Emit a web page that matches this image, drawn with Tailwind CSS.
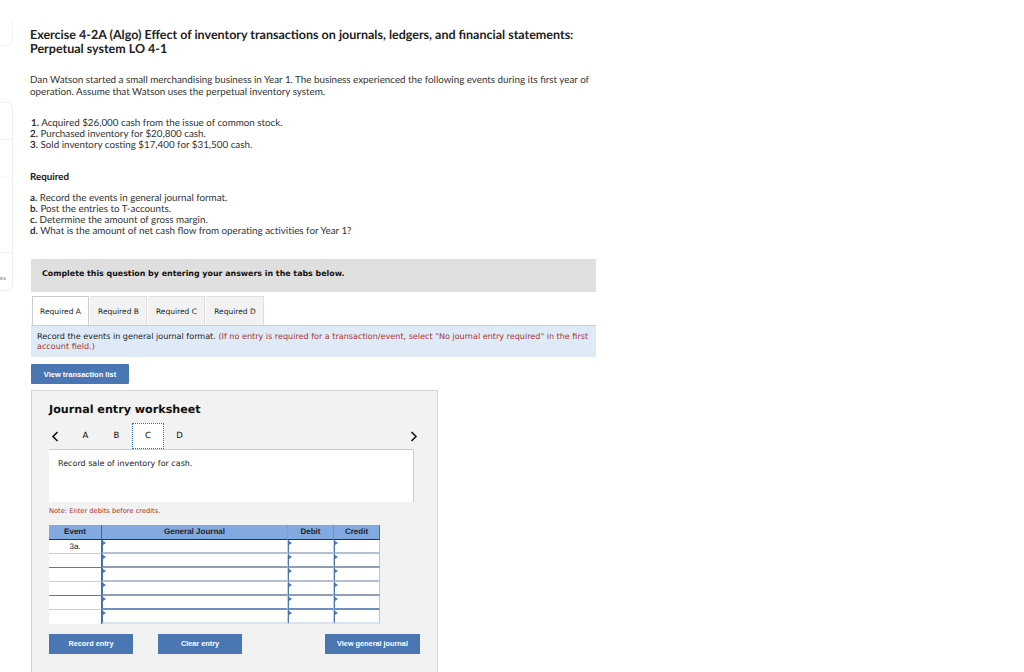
<!DOCTYPE html>
<html lang="en">
  <head>
    <meta charset="UTF-8" />
    <meta name="viewport" content="width=device-width, initial-scale=1.0" />
    <title>Exercise 4-2A</title>
    <script src="https://cdn.jsdelivr.net/npm/@tailwindcss/browser@4"></script>
  </head>
  <body class="bg-white h-[672px] overflow-hidden flex font-['Lato',sans-serif] text-[#333] [text-rendering:geometricPrecision]">
    <!-- cut off side rail -->
    <div class="w-[13px] shrink-0 mr-[18px]">
      <div class="h-[26px] mt-[20px] border-r border-b border-[#f3f3f3] rounded-br-md"></div>
      <div class="mt-[56px] h-[189px] border-r border-y border-[#efefef] rounded-r-md flex flex-col">
        <div class="h-[37px] border-b border-[#efefef]"></div>
        <div class="h-[37px] border-b border-[#f8f8f8]"></div>
        <div class="h-[76px] border-b border-[#efefef]"></div>
        <div class="text-[6px] text-[#777] pt-[22px] leading-[8px]">es</div>
      </div>
    </div>

    <main class="w-[565px] pt-[28px]">
      <div class="-ml-px">
        <h1 class="text-[12.5px] leading-[14px] font-bold text-[#222]">
          Exercise 4-2A (Algo) Effect of inventory transactions on journals, ledgers, and financial statements:<br />Perpetual system LO 4-1
        </h1>
        <p class="mt-[19px] text-[9.8px] leading-[11.5px] whitespace-nowrap">
          Dan Watson started a small merchandising business in Year 1. The business experienced the following events during its first year of<br />operation. Assume that Watson uses the perpetual inventory system.
        </p>
        <ol class="mt-[20px] text-[9.8px] leading-[11px]">
          <li><b class="font-bold ml-[1px]">1.</b> Acquired $26,000 cash from the issue of common stock.</li>
          <li><b class="font-bold">2.</b> Purchased inventory for $20,800 cash.</li>
          <li><b class="font-bold">3.</b> Sold inventory costing $17,400 for $31,500 cash.</li>
        </ol>
        <p class="mt-[21px] text-[9.8px] leading-[11px] font-bold text-[#222]">Required</p>
        <ul class="mt-[10px] text-[9.8px] leading-[11px]">
          <li><b class="font-bold">a.</b> Record the events in general journal format.</li>
          <li><b class="font-bold">b.</b> Post the entries to T-accounts.</li>
          <li><b class="font-bold">c.</b> Determine the amount of gross margin.</li>
          <li><b class="font-bold">d.</b> What is the amount of net cash flow from operating activities for Year 1?</li>
        </ul>
      </div>

      <div class="mt-[22px] h-[33px] bg-[#dfdfdf] pl-[11px] pb-[4px] flex items-center font-['DejaVu_Sans',sans-serif] text-[7.9px] font-bold text-[#111]">
        Complete this question by entering your answers in the tabs below.
      </div>

      <div class="mt-[4px] ml-[1px] h-[29px] flex gap-px font-['DejaVu_Sans',sans-serif] text-[7.5px] text-[#222]">
        <div class="w-[57px] pt-px bg-white border border-b-0 border-[#ccc] flex items-center justify-center">Required A</div>
        <div class="w-[57px] pt-px bg-[#f2f2f2] border-x border-t border-x-[#f2f2f2] border-r-[#ddd] border-t-[#ddd] flex items-center justify-center">Required B</div>
        <div class="w-[57px] pt-px bg-[#f2f2f2] border-x border-t border-x-[#f2f2f2] border-r-[#ddd] border-t-[#ddd] flex items-center justify-center">Required C</div>
        <div class="w-[58px] pt-px bg-[#f2f2f2] border-x border-t border-x-[#f2f2f2] border-r-[#ddd] border-t-[#ddd] flex items-center justify-center">Required D</div>
      </div>
      <div class="h-[32px] bg-[#deebf7] border-t border-[#ccd] pl-[6px] pt-[6px] font-['DejaVu_Sans',sans-serif] text-[8.07px] leading-[9.5px] text-[#222] whitespace-nowrap">
        Record the events in general journal format. <span class="text-[#a33]">(If no entry is required for a transaction/event, select "No journal entry required" in the first<br />account field.)</span>
      </div>
      <button class="mt-[7px] block w-[98px] h-[20px] pt-px bg-[#4a76b4] rounded-[1px] text-white font-['Liberation_Sans',sans-serif] text-[7.5px] font-bold">View transaction list</button>

      <!-- worksheet panel -->
      <section class="mt-[6px] w-[407px] h-[290px] bg-[#f2f2f2] border-l border-t border-r border-[#d4d4d4] pl-[17px] pt-[11px]">
        <h2 class="font-['DejaVu_Sans',sans-serif] text-[11.15px] leading-[15px] font-bold text-[#111]">Journal entry worksheet</h2>
        <div class="w-[365px] mt-[6px] h-[26px] flex items-center font-['DejaVu_Sans',sans-serif] text-[8.500px] text-[#111]">
          <svg class="w-[8px] h-[11px] ml-[2px]" viewBox="0 0 8 11" fill="none" stroke="#111" stroke-width="1.6"><path d="M6.5 1 2 5.500 6.500 10" /></svg>
          <span class="w-[31px] text-center ml-[11px]">A</span>
          <span class="w-[31px] text-center">B</span>
          <span class="w-[32px] h-[26px] bg-white border border-dotted border-[#36c] flex items-center justify-center">C</span>
          <span class="w-[31px] text-center">D</span>
          <svg class="w-[8px] h-[11px] ml-auto mr-[-4px]" viewBox="0 0 8 11" fill="none" stroke="#111" stroke-width="1.6"><path d="M1.500 1 6 5.500 1.500 10" /></svg>
        </div>
        <div class="w-[365px] h-[53px] bg-white border-t border-r border-[#ccc] pl-[9px] pt-[9px] font-['DejaVu_Sans',sans-serif] text-[8px] leading-[10px] text-[#222]">Record sale of inventory for cash.</div>
        <p class="mt-[5px] font-['DejaVu_Sans',sans-serif] text-[6.7px] leading-[8px] text-[#a33]">Note: Enter debits before credits.</p>

        <!-- journal table -->
        <div class="mt-[10px] w-[331px] grid grid-cols-[53px_186px_46px_46px] font-['Liberation_Sans',sans-serif] text-[8px] text-[#222]">
          <div class="h-[15px] bg-[#82aae0] border-r border-[#47699b] border-b border-b-[#333] flex items-center justify-center font-bold">Event</div>
          <div class="h-[15px] bg-[#82aae0] border-r border-[#7c9fd0] border-b border-b-[#333] flex items-center justify-center font-bold">General Journal</div>
          <div class="h-[15px] bg-[#82aae0] border-r border-[#6d93c8] border-b border-b-[#333] flex items-center justify-center font-bold">Debit</div>
          <div class="h-[15px] bg-[#82aae0] border-r border-[#47699b] border-b border-b-[#333] flex items-center justify-center font-bold">Credit</div>

          <div class="h-[14px] bg-white border-b border-[#ccc] border-r border-r-[#47699b] text-center leading-[13px]">3a.</div>
          <div class="h-[14px] bg-white border-x border-l-[#4a76b4] border-r-[#c5cfdf] border-b-2 border-b-[#b4bfd2] relative"><i class="absolute left-0 top-[1px] border-y-[2px] border-l-[3px] border-y-transparent border-l-[#4a76b4]"></i></div>
          <div class="h-[14px] bg-white border-x border-l-[#4a76b4] border-r-[#c5cfdf] border-b-2 border-b-[#b4bfd2] relative"><i class="absolute left-0 top-[1px] border-y-[2px] border-l-[3px] border-y-transparent border-l-[#4a76b4]"></i></div>
          <div class="h-[14px] bg-white border-x border-l-[#4a76b4] border-r-[#b8c6dc] border-b-2 border-b-[#b4bfd2] relative"><i class="absolute left-0 top-[1px] border-y-[2px] border-l-[3px] border-y-transparent border-l-[#4a76b4]"></i></div>

          <div class="h-[14px] bg-white border-b border-[#777] border-r border-r-[#47699b]"></div>
          <div class="h-[14px] bg-white border-x border-l-[#4a76b4] border-r-[#c5cfdf] border-b-2 border-b-[#8f9cb2] relative"><i class="absolute left-0 top-[1px] border-y-[2px] border-l-[3px] border-y-transparent border-l-[#4a76b4]"></i></div>
          <div class="h-[14px] bg-white border-x border-l-[#4a76b4] border-r-[#c5cfdf] border-b-2 border-b-[#8f9cb2] relative"><i class="absolute left-0 top-[1px] border-y-[2px] border-l-[3px] border-y-transparent border-l-[#4a76b4]"></i></div>
          <div class="h-[14px] bg-white border-x border-l-[#4a76b4] border-r-[#b8c6dc] border-b-2 border-b-[#8f9cb2] relative"><i class="absolute left-0 top-[1px] border-y-[2px] border-l-[3px] border-y-transparent border-l-[#4a76b4]"></i></div>

          <div class="h-[14px] bg-white border-b border-[#ccc] border-r border-r-[#47699b]"></div>
          <div class="h-[14px] bg-white border-x border-l-[#4a76b4] border-r-[#c5cfdf] border-b-2 border-b-[#b4bfd2] relative"><i class="absolute left-0 top-[1px] border-y-[2px] border-l-[3px] border-y-transparent border-l-[#4a76b4]"></i></div>
          <div class="h-[14px] bg-white border-x border-l-[#4a76b4] border-r-[#c5cfdf] border-b-2 border-b-[#b4bfd2] relative"><i class="absolute left-0 top-[1px] border-y-[2px] border-l-[3px] border-y-transparent border-l-[#4a76b4]"></i></div>
          <div class="h-[14px] bg-white border-x border-l-[#4a76b4] border-r-[#b8c6dc] border-b-2 border-b-[#b4bfd2] relative"><i class="absolute left-0 top-[1px] border-y-[2px] border-l-[3px] border-y-transparent border-l-[#4a76b4]"></i></div>

          <div class="h-[14px] bg-white border-b border-[#777] border-r border-r-[#47699b]"></div>
          <div class="h-[14px] bg-white border-x border-l-[#4a76b4] border-r-[#c5cfdf] border-b-2 border-b-[#8f9cb2] relative"><i class="absolute left-0 top-[1px] border-y-[2px] border-l-[3px] border-y-transparent border-l-[#4a76b4]"></i></div>
          <div class="h-[14px] bg-white border-x border-l-[#4a76b4] border-r-[#c5cfdf] border-b-2 border-b-[#8f9cb2] relative"><i class="absolute left-0 top-[1px] border-y-[2px] border-l-[3px] border-y-transparent border-l-[#4a76b4]"></i></div>
          <div class="h-[14px] bg-white border-x border-l-[#4a76b4] border-r-[#b8c6dc] border-b-2 border-b-[#8f9cb2] relative"><i class="absolute left-0 top-[1px] border-y-[2px] border-l-[3px] border-y-transparent border-l-[#4a76b4]"></i></div>

          <div class="h-[14px] bg-white border-b border-[#ccc] border-r border-r-[#47699b]"></div>
          <div class="h-[14px] bg-white border-x border-l-[#4a76b4] border-r-[#c5cfdf] border-b-2 border-b-[#6f8fc0] relative"><i class="absolute left-0 top-[1px] border-y-[2px] border-l-[3px] border-y-transparent border-l-[#4a76b4]"></i></div>
          <div class="h-[14px] bg-white border-x border-l-[#4a76b4] border-r-[#c5cfdf] border-b-2 border-b-[#6f8fc0] relative"><i class="absolute left-0 top-[1px] border-y-[2px] border-l-[3px] border-y-transparent border-l-[#4a76b4]"></i></div>
          <div class="h-[14px] bg-white border-x border-l-[#4a76b4] border-r-[#b8c6dc] border-b-2 border-b-[#6f8fc0] relative"><i class="absolute left-0 top-[1px] border-y-[2px] border-l-[3px] border-y-transparent border-l-[#4a76b4]"></i></div>

          <div class="h-[14px] bg-white border-r border-r-[#47699b]"></div>
          <div class="h-[14px] bg-white border-x border-l-[#4a76b4] border-r-[#c5cfdf] border-b-2 border-b-[#dbe3f0] relative"><i class="absolute left-0 top-[1px] border-y-[2px] border-l-[3px] border-y-transparent border-l-[#4a76b4]"></i></div>
          <div class="h-[14px] bg-white border-x border-l-[#4a76b4] border-r-[#c5cfdf] border-b-2 border-b-[#dbe3f0] relative"><i class="absolute left-0 top-[1px] border-y-[2px] border-l-[3px] border-y-transparent border-l-[#4a76b4]"></i></div>
          <div class="h-[14px] bg-white border-x border-l-[#4a76b4] border-r-[#b8c6dc] border-b-2 border-b-[#dbe3f0] relative"><i class="absolute left-0 top-[1px] border-y-[2px] border-l-[3px] border-y-transparent border-l-[#4a76b4]"></i></div>
        </div>

        <div class="mt-[10px] w-[371px] flex font-['Liberation_Sans',sans-serif] text-[7.3px] font-bold text-white">
          <button class="w-[84px] h-[20px] bg-[#4a76b4]">Record entry</button>
          <button class="w-[84px] h-[20px] ml-[25px] bg-[#4a76b4]">Clear entry</button>
          <button class="w-[95px] h-[20px] ml-auto bg-[#4a76b4]">View general journal</button>
        </div>
      </section>
    </main>
  </body>
</html>
